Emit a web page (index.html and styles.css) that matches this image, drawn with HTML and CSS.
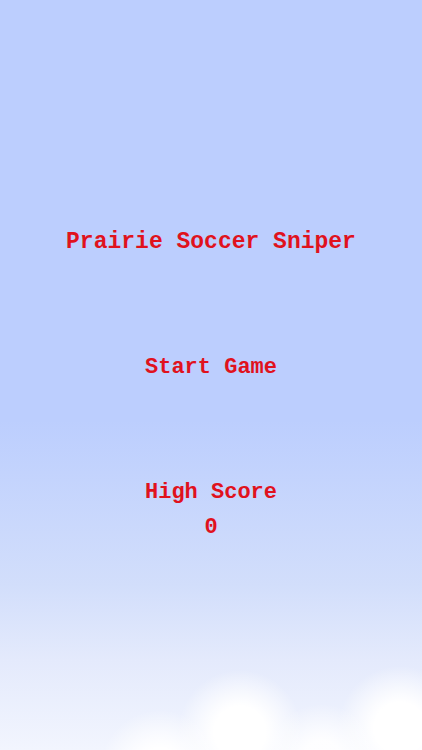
FILE: index.html
```html
<!DOCTYPE html>
<html lang="en">
<head>
    <meta charset="UTF-8">
    <meta name="viewport" content="width=device-width, initial-scale=1.0">
    <title>Prairie Soccer Sniper</title>
    <link rel="stylesheet" href="styles.css">
</head>
<body>
    <main class="menu">
        <h1 class="title">Prairie Soccer Sniper</h1>
        <button class="menu-btn" onclick="startGame()">Start Game</button>
        <div class="high-score">
            <div class="label">High Score</div>
            <div class="value" id="high-score">0</div>
        </div>
    </main>

    <script>
        function startGame() {
            console.log('start');
        }

        const best = localStorage.getItem('pss-high-score');
        if (best) {
            document.getElementById('high-score').textContent = best;
        }
    </script>
</body>
</html>
```

FILE: styles.css
```css
:root {
    --sky: #bccefe;
    --text-red: #e0121d;
}

* {
    margin: 0;
    padding: 0;
    box-sizing: border-box;
}

html, body {
    height: 100%;
}

body {
    font-family: "Liberation Mono", "Courier New", monospace;
    background:
        radial-gradient(circle at 160px 770px, #fff 0, #fff 22px, rgba(255,255,255,0) 60px),
        radial-gradient(circle at 240px 732px, #fff 0, #fff 26px, rgba(255,255,255,0) 62px),
        radial-gradient(circle at 322px 760px, rgba(255,255,255,0.9) 0, rgba(255,255,255,0.9) 20px, rgba(255,255,255,0) 56px),
        radial-gradient(circle at 400px 728px, #fff 0, #fff 26px, rgba(255,255,255,0) 62px),
        linear-gradient(to bottom, var(--sky) 0, var(--sky) 420px, #d2defb 585px, #e4eafc 660px, #f2f5fe 750px);
    overflow: hidden;
}

.menu {
    display: flex;
    flex-direction: column;
    align-items: center;
    padding-top: 227px;
    color: var(--text-red);
    font-size: 22px;
    font-weight: bold;
    line-height: 30px;
}

.title {
    font-size: 23px;
    font-weight: bold;
}

.menu-btn {
    margin-top: 96px;
    border: none;
    background: none;
    font: inherit;
    color: inherit;
    line-height: 30px;
    cursor: pointer;
}

.high-score {
    margin-top: 95px;
    display: flex;
    flex-direction: column;
    align-items: center;
    gap: 5px;
}
```
